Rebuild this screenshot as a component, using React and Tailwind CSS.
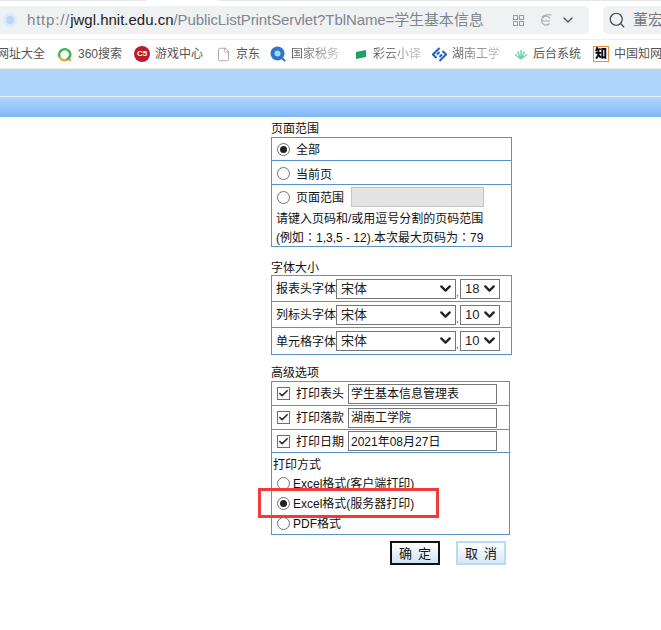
import React from 'react';
import { ChevronDown, Search, Check, File } from 'lucide-react';

const font = 'font-["Liberation_Sans","Noto_Sans_CJK_SC",sans-serif]';

const Radio = ({ checked }) => (
    <span className="w-[13px] h-[13px] shrink-0 rounded-full border border-[#6f6f6f] bg-white flex items-center justify-center">
        {checked && <span className="w-[7px] h-[7px] rounded-full bg-[#222]" />}
    </span>
);

const Tick = () => (
    <span className="w-[13px] h-[13px] shrink-0 border border-[#6f6f6f] bg-white flex items-center justify-center">
        <Check className="w-[11px] h-[11px] text-[#222]" strokeWidth={3.4} />
    </span>
);

const Select = ({ value, width }) => (
    <span className={`relative h-[20px] border border-[#767676] bg-white flex items-center pl-[4px] text-[13px] text-[#222] ${width}`}>
        {value}
        <ChevronDown className="absolute right-[1px] top-[0px] w-[17px] h-[17px] text-[#222]" strokeWidth={3.2} />
    </span>
);

const FontRow = ({ label, size, last }) => (
    <div className={`h-[26px] flex items-center pl-[4px] ${last ? '' : 'border-b border-[#5b92cc]'}`}>
        <span className="w-[60px] pt-px text-[12px] whitespace-nowrap">{label}</span>
        <Select value="宋体" width="w-[120px]" />
        <span className="w-[4px] text-[10px] leading-none pt-[8px] text-[#555]">,</span>
        <Select value={size} width="w-[40px]" />
    </div>
);

const PrintRow = ({ label, value, height = 'h-[24px]' }) => (
    <div className={`${height} flex items-center pl-[5px] border-b border-[#5b92cc]`}>
        <Tick />
        <span className="ml-[6px] w-[52px] pt-px text-[12px] whitespace-nowrap">{label}</span>
        <span className="w-[149px] h-[20px] border border-[#767676] bg-white flex items-center pl-[2px] pt-px text-[12px]">{value}</span>
    </div>
);

const Bookmark = ({ icon, label, width, fade }) => (
    <div className={`flex items-center gap-[5px] shrink-0 ${width}`}>
        {icon}
        <span className={`text-[12px] whitespace-nowrap ${fade ? 'bg-gradient-to-r from-[#555] to-[#c4c4c4] bg-clip-text text-transparent' : 'text-[#555]'}`}>{label}</span>
    </div>
);

export default function App() {
    return (
        <div className={`w-[661px] h-[630px] relative overflow-hidden bg-white text-[#111] ${font}`}>
            {/* browser toolbar */}
            <div className="h-px flex bg-[#e4e6ea]">
                <span className="ml-[146px] w-[73px] bg-white" />
            </div>
            <div className="h-[38px] pt-[5px] flex">
                <div className="w-[589px] h-[28px] bg-[#f0f1f3] rounded-r-[5px] flex items-center text-[15px]">
                    <span className="w-[14px] h-[14px] ml-[3px] rounded-full bg-[#bcd7fb] border-[3px] border-[#dceafd]" />
                    <span className="ml-[10px] tracking-[0.8px] text-[#80858c] whitespace-nowrap">http://</span>
                    <span className="text-[#222] whitespace-nowrap">jwgl.hnit.edu.cn</span>
                    <span className="text-[#80858c] tracking-[-0.1px] whitespace-nowrap">/PublicListPrintServlet?TblName=学生基本信息</span>
                    <span className="ml-auto mr-[13px] flex items-center text-[#777]">
                        <span className="grid grid-cols-2 gap-[1px]">
                            <span className="w-[5px] h-[5px] border border-[#999]" />
                            <span className="w-[5px] h-[5px] border border-[#999]" />
                            <span className="w-[5px] h-[5px] border border-[#999]" />
                            <span className="w-[5px] h-[5px] border border-[#999]" />
                        </span>
                        <svg className="ml-[15px]" width="13" height="13" viewBox="0 0 13 13" fill="none" stroke="#aaa" strokeWidth="1.2">
                            <path d="M2 7h9M11 4.5A4.5 4.5 0 1 0 10.5 9.5M3 3C5 1 9 .5 12.5 1" />
                        </svg>
                        <ChevronDown className="ml-[8px] w-[16px] h-[16px] text-[#555]" strokeWidth={2} />
                    </span>
                </div>
                <div className="ml-[14px] flex-1 h-[28px] bg-[#f0f1f3] rounded-l-[5px] flex items-center pl-[5px] gap-[7px] overflow-hidden">
                    <Search className="w-[18px] h-[18px] shrink-0 text-[#444]" strokeWidth={1.6} />
                    <span className="text-[15px] text-[#777] whitespace-nowrap">董宏</span>
                </div>
            </div>

            {/* bookmarks */}
            <div className="h-[30px] border-t border-[#eee] border-b flex items-center overflow-hidden">
                <Bookmark width="w-[57px] -ml-[3px] pl-0 mr-[3px]" label="网址大全" />
                <Bookmark
                    width="w-[77px]"
                    label="360搜索"
                    icon={
                        <svg className="mr-[1px]" width="15" height="15" viewBox="0 0 15 15" fill="none" strokeWidth="2.6">
                            <path d="M2.6 10A5.6 5.6 0 0 1 12.6 5" stroke="#3fb45a" />
                            <path d="M12.6 5A5.6 5.6 0 0 1 9.5 12.8" stroke="#3fb45a" />
                            <path d="M9.5 12.8A5.6 5.6 0 0 1 2.6 10" stroke="#f5a13c" />
                            <circle cx="13" cy="13" r="1.3" fill="#f5a13c" stroke="none" />
                        </svg>
                    }
                />
                <Bookmark
                    width="w-[83px]"
                    label="游戏中心"
                    icon={<span className="w-[16px] h-[16px] rounded-full bg-[#b81c2a] flex items-center justify-center text-white text-[8px] font-bold">C5</span>}
                />
                <Bookmark
                    width="w-[53px]"
                    label="京东"
                    icon={<File className="w-[15px] h-[15px] -ml-[1px] text-[#999]" strokeWidth={1.3} />}
                />
                <Bookmark
                    width="w-[84px]"
                    label="国家税务"
                    fade
                    icon={
                        <svg width="16" height="16" viewBox="0 0 16 16">
                            <circle cx="7.5" cy="7.5" r="7" fill="#2a78c8" />
                            <path d="M12 12l3 3" stroke="#2a78c8" strokeWidth="2" />
                            <circle cx="7.5" cy="7.5" r="3" fill="#a9d3f5" />
                        </svg>
                    }
                />
                <Bookmark
                    width="w-[78px]"
                    label="彩云小译"
                    fade
                    icon={
                        <svg className="ml-[2px] mr-[2px]" width="10" height="9" viewBox="0 0 10 9">
                            <path d="M0 2l10-2v7L0 9z" fill="#1ea05f" />
                        </svg>
                    }
                />
                <Bookmark
                    width="w-[82px]"
                    label="湖南工学"
                    fade
                    icon={
                        <svg width="15" height="15" viewBox="0 0 15 15" fill="none" stroke="#1b66c0" strokeWidth="2">
                            <path d="M7.5 1L1 7.5 4.5 11M7.5 14L14 7.5 10.5 4M5 7.5l2.5-2.5M10 7.5L7.5 10" />
                        </svg>
                    }
                />
                <Bookmark
                    width="w-[79px]"
                    label="后台系统"
                    icon={
                        <svg width="14" height="12" viewBox="0 0 14 12" fill="none" stroke="#6fcdb3" strokeWidth="1.4">
                            <path d="M7 11V2M7 11L3.5 3.5M7 11l3.5-7.5M7 11L1 6.5M7 11l6-4.500" />
                        </svg>
                    }
                />
                <Bookmark
                    width="w-[70px]"
                    label="中国知网"
                    icon={<span className="w-[16px] h-[16px] border border-[#f08a3c] text-[12px] font-black leading-[14px] text-center text-black">知</span>}
                />
            </div>

            {/* page header */}
            <div className="h-[27px] bg-[#b0d5fd]" />
            <div className="h-[21px] border-t border-[#e6f1fe] bg-gradient-to-b from-[#b4d4f9] to-[#7fb7f7]" />

            {/* print form */}
            <div className="ml-[271px] w-[241px] pt-[5px] text-[12px]">
                <div className="h-[15px] leading-[15px]">页面范围</div>
                <div className="border border-[#5b92cc]">
                    <div className="h-[23px] flex items-center pl-[5px] gap-[6px] border-b border-[#5b92cc]">
                        <Radio checked />
                        <span className="pt-[2px]">全部</span>
                    </div>
                    <div className="h-[24px] flex items-center pl-[5px] pt-[2px] gap-[6px] border-b border-[#5b92cc]">
                        <Radio />
                        <span className="pt-[2px]">当前页</span>
                    </div>
                    <div className="h-[61px] pl-[5px]">
                        <div className="h-[24px] flex items-center gap-[6px]">
                            <Radio />
                            <span className="pt-[2px]">页面范围</span>
                            <span className="w-[133px] h-[20px] ml-[1px] bg-[#e3e3e3] border border-[#c4c4c4]" />
                        </div>
                        <div className="h-[19px] leading-[21px] whitespace-nowrap -ml-[1px]">请键入页码和/或用逗号分割的页码范围</div>
                        <div className="h-[18px] leading-[20px] whitespace-nowrap -ml-[1px] font-['Liberation_Sans','Noto_Sans_CJK_TC',sans-serif]">(例如：1,3,5 - 12).本次最大页码为：79</div>
                    </div>
                </div>

                <div className="h-[15px] leading-[15px] mt-[14px]">字体大小</div>
                <div className="-mt-[1px] border border-[#5b92cc]">
                    <FontRow label="报表头字体" size="18" />
                    <FontRow label="列标头字体" size="10" />
                    <FontRow label="单元格字体" size="10" last />
                </div>

                <div className="h-[15px] leading-[15px] mt-[11px]">高级选项</div>
                <div className="w-[239px] border border-[#5b92cc]">
                    <PrintRow label="打印表头" value="学生基本信息管理表" />
                    <PrintRow label="打印落款" value="湖南工学院" />
                    <PrintRow label="打印日期" value="2021年08月27日" height="h-[23px]" />
                    <div className="h-[81px] pl-[1px]">
                        <div className="h-[20px] leading-[24px]">打印方式</div>
                        <div className="h-[20px] flex items-center gap-[3px] pl-[4px]">
                            <Radio />
                            <span className="pt-[2px]">Excel格式(客户端打印)</span>
                        </div>
                        <div className="h-[20px] flex items-center gap-[3px] pl-[4px]">
                            <Radio checked />
                            <span className="pt-[2px]">Excel格式(服务器打印)</span>
                        </div>
                        <div className="h-[20px] flex items-center gap-[3px] pl-[4px]">
                            <Radio />
                            <span className="pt-[2px]">PDF格式</span>
                        </div>
                    </div>
                </div>

                <div className="flex mt-[6px] ml-[119px] gap-[16px]">
                    <button className="w-[50px] h-[24px] border-2 border-[#111] bg-gradient-to-b from-[#ffffff] to-[#cfe3f5] text-[13px] leading-[22px] tracking-[6px] pl-[6px]">确定</button>
                    <button className="w-[50px] h-[24px] border-2 border-[#b9dcf1] bg-gradient-to-b from-[#ffffff] to-[#d8e8f5] text-[13px] leading-[22px] tracking-[6px] pl-[6px]">取消</button>
                </div>
            </div>

            {/* red annotation over the form */}
            <div className="absolute left-[258px] top-[488px] w-[181px] h-[30px] border-[3px] border-[#f23a3a]" />
        </div>
    );
}
